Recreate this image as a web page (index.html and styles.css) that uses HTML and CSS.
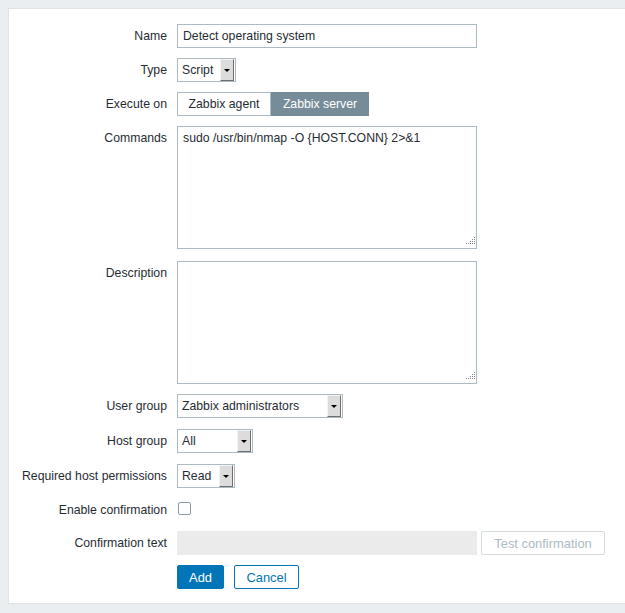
FILE: index.html
```html
<!DOCTYPE html>
<html lang="en">
<head>
    <meta charset="UTF-8">
    <meta name="viewport" content="width=device-width, initial-scale=1.0">
    <title>Scripts</title>
    <link rel="stylesheet" href="styles.css">
</head>
<body>
    <div class="panel">
        <div class="form-list">
            <div class="form-label">Name</div>
            <div class="form-field">
                <input class="text-box name-box" type="text" value="Detect operating system">
            </div>

            <div class="form-label">Type</div>
            <div class="form-field">
                <div class="select type-select">
                    <span class="select-text">Script</span>
                    <span class="select-btn"><span class="select-arrow"></span></span>
                </div>
            </div>

            <div class="form-label">Execute on</div>
            <div class="form-field">
                <div class="radio-segmented">
                    <span class="segment seg-agent">Zabbix agent</span>
                    <span class="segment seg-server selected">Zabbix server</span>
                </div>
            </div>

            <div class="form-label">Commands</div>
            <div class="form-field commands-field">
                <div class="area-wrap">
                    <textarea class="text-area">sudo /usr/bin/nmap -O {HOST.CONN} 2&gt;&amp;1</textarea>
                    <svg class="grip" width="9" height="9" viewBox="0 0 9 9">
                        <rect x="8" y="0" width="1" height="1"/>
                        <rect x="6" y="2" width="1" height="1"/><rect x="8" y="2" width="1" height="1"/>
                        <rect x="4" y="4" width="1" height="1"/><rect x="6" y="4" width="1" height="1"/><rect x="8" y="4" width="1" height="1"/>
                        <rect x="0" y="6" width="1" height="1"/><rect x="2" y="6" width="1" height="1"/><rect x="4" y="6" width="1" height="1"/><rect x="6" y="6" width="1" height="1"/><rect x="8" y="6" width="1" height="1"/>
                    </svg>
                </div>
            </div>

            <div class="form-label">Description</div>
            <div class="form-field">
                <div class="area-wrap">
                    <textarea class="text-area"></textarea>
                    <svg class="grip" width="9" height="9" viewBox="0 0 9 9">
                        <rect x="8" y="0" width="1" height="1"/>
                        <rect x="6" y="2" width="1" height="1"/><rect x="8" y="2" width="1" height="1"/>
                        <rect x="4" y="4" width="1" height="1"/><rect x="6" y="4" width="1" height="1"/><rect x="8" y="4" width="1" height="1"/>
                        <rect x="0" y="6" width="1" height="1"/><rect x="2" y="6" width="1" height="1"/><rect x="4" y="6" width="1" height="1"/><rect x="6" y="6" width="1" height="1"/><rect x="8" y="6" width="1" height="1"/>
                    </svg>
                </div>
            </div>

            <div class="form-label">User group</div>
            <div class="form-field">
                <div class="select usrgrp-select">
                    <span class="select-text">Zabbix administrators</span>
                    <span class="select-btn"><span class="select-arrow"></span></span>
                </div>
            </div>

            <div class="form-label shift">Host group</div>
            <div class="form-field shift">
                <div class="select hostgrp-select">
                    <span class="select-text">All</span>
                    <span class="select-btn"><span class="select-arrow"></span></span>
                </div>
            </div>

            <div class="form-label shift">Required host permissions</div>
            <div class="form-field shift">
                <div class="select perm-select">
                    <span class="select-text">Read</span>
                    <span class="select-btn"><span class="select-arrow"></span></span>
                </div>
            </div>

            <div class="form-label check-label">Enable confirmation</div>
            <div class="form-field check-field">
                <span class="checkbox"></span>
            </div>

            <div class="form-label">Confirmation text</div>
            <div class="form-field confirm-field">
                <input class="text-box name-box" type="text" disabled>
                <button class="btn-alt" disabled>Test confirmation</button>
            </div>

            <div class="form-label"></div>
            <div class="form-field actions">
                <button class="btn-main">Add</button>
                <button class="btn-alt btn-cancel">Cancel</button>
            </div>
        </div>
    </div>
</body>
</html>
```

FILE: styles.css
```css
html {
    overflow: hidden;
}
body {
    margin: 8px 0 0 8px;
    background: #ebeef0;
    font-family: 'Liberation Sans', Arial, sans-serif;
    font-size: 12.25px;
    color: #1f2c33;
}
.panel {
    background: #fff;
    border: 1px solid #dfe4e7;
    border-right: none;
    padding: 15px 0 14px 0;
}
.form-list {
    display: grid;
    grid-template-columns: 158px 1fr;
    column-gap: 10px;
    row-gap: 10px;
    align-items: start;
}
.form-label {
    text-align: right;
    line-height: 24px;
    height: 24px;
    white-space: nowrap;
}
.form-field {
    display: flex;
    align-items: center;
    min-height: 24px;
}
.shift {
    margin-top: 1px;
}
.text-box {
    box-sizing: border-box;
    height: 24px;
    border: 1px solid #acbbc2;
    padding: 0 5px;
    font-family: inherit;
    font-size: inherit;
    color: #1f2c33;
    background: #fff;
    outline: none;
    margin: 0;
}
.name-box {
    width: 300px;
}
.text-box:disabled {
    background: #ebebeb;
    border-color: #ebebeb;
}

/* selects */
.select {
    box-sizing: border-box;
    display: flex;
    height: 24px;
    border: 1px solid #acbbc2;
    background: #fff;
}
.select-text {
    flex: 1;
    padding-left: 4px;
    line-height: 22px;
    white-space: nowrap;
    overflow: hidden;
}
.select-btn {
    box-sizing: border-box;
    width: 14px;
    margin: 0 1px 0 0;
    background: #dcdcdc;
    border-top: 1px solid #f4f4f4;
    border-left: 1px solid #f4f4f4;
    border-right: 1px solid #6e6e6e;
    border-bottom: 1px solid #6e6e6e;
    display: flex;
    align-items: center;
    justify-content: center;
}
.select-arrow {
    width: 0;
    height: 0;
    border-left: 3px solid transparent;
    border-right: 3px solid transparent;
    border-top: 3px solid #000;
}
.type-select { width: 59px; }
.usrgrp-select { width: 166px; }
.hostgrp-select { width: 76px; }
.perm-select { width: 58px; }

/* segmented radio */
.radio-segmented {
    display: flex;
    height: 24px;
}
.segment {
    box-sizing: border-box;
    height: 24px;
    line-height: 22px;
    text-align: center;
    white-space: nowrap;
    border: 1px solid #acbbc2;
    background: #fff;
}
.seg-agent { width: 94px; }
.seg-server { width: 98px; }
.segment.selected {
    background: #768d99;
    border-color: #768d99;
    color: #fff;
}

/* text areas */
.commands-field {
    margin-bottom: 2px;
}
.area-wrap {
    position: relative;
    width: 300px;
    height: 123px;
}
.text-area {
    display: block;
    box-sizing: border-box;
    width: 300px;
    height: 123px;
    border: 1px solid #acbbc2;
    padding: 4px 5px;
    margin: 0;
    resize: none;
    font-family: inherit;
    font-size: inherit;
    line-height: 14px;
    color: #1f2c33;
    outline: none;
}
.grip {
    position: absolute;
    right: 2px;
    bottom: 3px;
    fill: #7d8a91;
}

/* checkbox row */
.check-label,
.check-field {
    margin-top: 1px;
    height: 22px;
    min-height: 22px;
    line-height: 22px;
}
.check-field {
    align-items: flex-start;
}
.checkbox {
    box-sizing: border-box;
    display: block;
    width: 13px;
    height: 13px;
    margin: 3px 0 0 1px;
    border: 1px solid #8f9ca3;
    border-radius: 2px;
    background: #fff;
}

.confirm-field {
    gap: 4px;
}
.btn-main,
.btn-alt {
    box-sizing: border-box;
    height: 24px;
    padding: 0;
    border-radius: 2px;
    font-family: inherit;
    font-size: 12.9px;
    margin: 0;
    cursor: pointer;
}
.btn-main {
    width: 47px;
    background: #0275b8;
    border: 1px solid #0275b8;
    color: #fff;
}
.btn-alt {
    background: #fff;
    border: 1px solid #0275b8;
    color: #0275b8;
}
.btn-alt:disabled {
    border-color: #d3dbdf;
    color: #acbbc2;
    width: 124px;
}
.btn-cancel {
    width: 65px;
}
.actions {
    gap: 10px;
}
```
